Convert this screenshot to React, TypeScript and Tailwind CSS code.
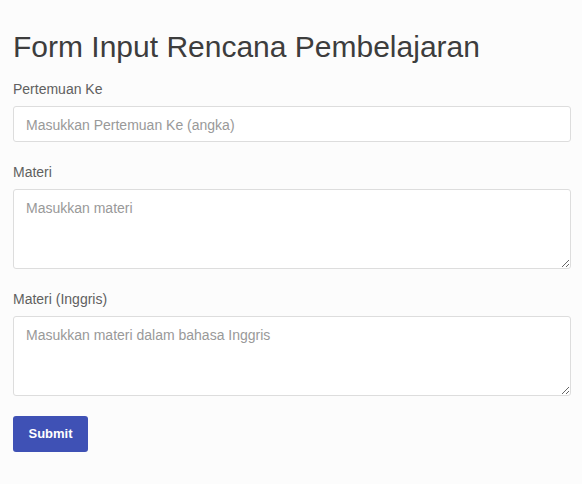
import React from "react";

const font = { fontFamily: '"Liberation Sans", Arial, sans-serif' };

function Field({
  label,
  children,
  className = "",
}: {
  label: string;
  children: React.ReactNode;
  className?: string;
}) {
  return (
    <div className={`flex flex-col ${className}`}>
      <label className="mb-[9px] text-[14px] leading-[16px] text-[#606060]">{label}</label>
      {children}
    </div>
  );
}

export default function App() {
  return (
    <div
      className="min-h-[484px] w-full bg-[#fcfcfc] pl-[13px] pr-[11px] pt-[29px]"
      style={font}
    >
      <h1 className="mb-[16px] text-[30px] leading-[36px] font-normal text-[#3d3d3d]">
        Form Input Rencana Pembelajaran
      </h1>
      <form className="flex flex-col" onSubmit={(e) => e.preventDefault()}>
        <Field label="Pertemuan Ke" className="mb-[22px]">
          <input
            type="text"
            placeholder="Masukkan Pertemuan Ke (angka)"
            className="h-[36px] w-full rounded-[3px] border border-[#ddd] bg-white px-3 pt-[1px] text-[14px] text-[#333] outline-none placeholder:text-[#999]"
          />
        </Field>
        <Field label="Materi" className="mb-[22px]">
          <textarea
            placeholder="Masukkan materi"
            className="h-[80px] w-full rounded-[3px] border border-[#ddd] bg-white px-3 py-[10px] text-[14px] leading-[16px] text-[#333] outline-none placeholder:text-[#999]"
          />
        </Field>
        <Field label="Materi (Inggris)" className="mb-[20px]">
          <textarea
            placeholder="Masukkan materi dalam bahasa Inggris"
            className="h-[80px] w-full rounded-[3px] border border-[#ddd] bg-white px-3 py-[10px] text-[14px] leading-[16px] text-[#333] outline-none placeholder:text-[#999]"
          />
        </Field>
        <div>
          <button
            type="submit"
            className="h-[36px] w-[75px] rounded-[3px] bg-[#3f51b5] text-[13px] font-bold text-white"
          >
            Submit
          </button>
        </div>
      </form>
    </div>
  );
}
